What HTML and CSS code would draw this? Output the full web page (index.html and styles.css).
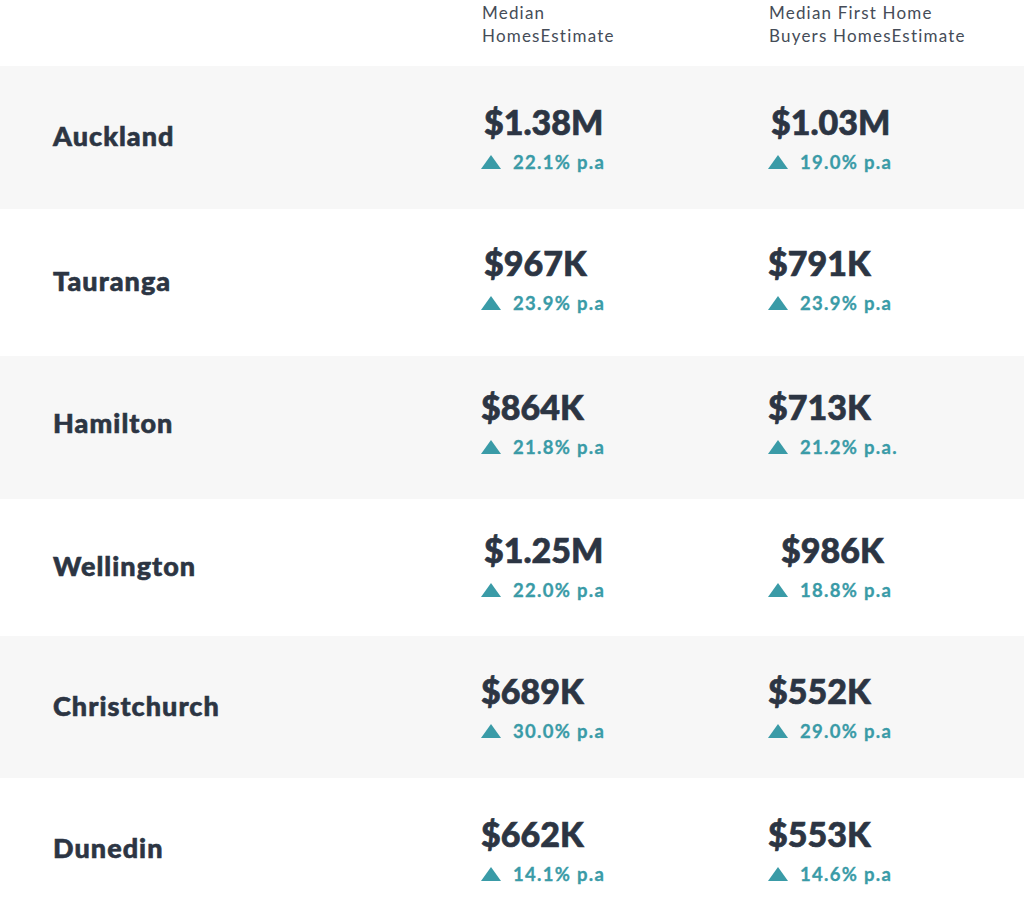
FILE: index.html
```html
<!DOCTYPE html>
<html lang="en">
<head>
<meta charset="utf-8">
<title>Median Home Estimates</title>
<link rel="stylesheet" href="styles.css">
</head>
<body>
<div class="table">
  <div class="head">
    <div class="head-cell"></div>
    <div class="head-cell">Median<br>HomesEstimate</div>
    <div class="head-cell">Median First Home<br>Buyers HomesEstimate</div>
  </div>

  <div class="row shade h143">
    <div class="city">Auckland</div>
    <div class="value"><div class="price shift-3">$1.38M</div><div class="growth"><span class="tri"></span>22.1% p.a</div></div>
    <div class="value"><div class="price shift-3">$1.03M</div><div class="growth"><span class="tri"></span>19.0% p.a</div></div>
  </div>

  <div class="row h147 lift-4">
    <div class="city">Tauranga</div>
    <div class="value"><div class="price shift-3">$967K</div><div class="growth"><span class="tri"></span>23.9% p.a</div></div>
    <div class="value"><div class="price">$791K</div><div class="growth"><span class="tri"></span>23.9% p.a</div></div>
  </div>

  <div class="row shade h143 lift-5">
    <div class="city">Hamilton</div>
    <div class="value"><div class="price">$864K</div><div class="growth"><span class="tri"></span>21.8% p.a</div></div>
    <div class="value"><div class="price">$713K</div><div class="growth"><span class="tri"></span>21.2% p.a.</div></div>
  </div>

  <div class="row h137 lift-2">
    <div class="city">Wellington</div>
    <div class="value"><div class="price shift-3">$1.25M</div><div class="growth"><span class="tri"></span>22.0% p.a</div></div>
    <div class="value"><div class="price shift-13">$986K</div><div class="growth"><span class="tri"></span>18.8% p.a</div></div>
  </div>

  <div class="row shade h142">
    <div class="city">Christchurch</div>
    <div class="value"><div class="price">$689K</div><div class="growth"><span class="tri"></span>30.0% p.a</div></div>
    <div class="value"><div class="price">$552K</div><div class="growth"><span class="tri"></span>29.0% p.a</div></div>
  </div>

  <div class="row h143">
    <div class="city">Dunedin</div>
    <div class="value"><div class="price">$662K</div><div class="growth"><span class="tri"></span>14.1% p.a</div></div>
    <div class="value"><div class="price">$553K</div><div class="growth"><span class="tri"></span>14.6% p.a</div></div>
  </div>
</div>
</body>
</html>
```

FILE: styles.css
```css
html, body {
  margin: 0;
  padding: 0;
  background: #ffffff;
}

body {
  font-family: "Lato", "Open Sans", sans-serif;
  color: #2c3543;
}

.table {
  width: 1024px;
}

.head,
.row {
  display: grid;
  grid-template-columns: 481px 287px 1fr;
}

.head {
  height: 66px;
  box-sizing: border-box;
  padding-top: 1px;
}

.head-cell {
  font-size: 17px;
  line-height: 23px;
  font-weight: 400;
  letter-spacing: 1.2px;
  color: #454c58;
  padding-left: 1px;
}

.row {
  align-items: center;
}

.shade {
  background: #f7f7f7;
}

.h137 { height: 137px; }
.h142 { height: 142px; }
.h143 { height: 143px; }
.h147 { height: 147px; }

.city {
  padding-left: 53px;
  padding-bottom: 3px;
  font-size: 27px;
  font-weight: 900;
  line-height: 32px;
  letter-spacing: 1.05px;
  color: #2c3543;
  -webkit-text-stroke: 0.6px #2c3543;
}

.value {
  display: flex;
  flex-direction: column;
  gap: 8px;
}

/* content in some rows sits slightly above the row's centre */
.lift-2 .value { padding-bottom: 4px; }
.lift-4 .value { padding-bottom: 8px; }
.lift-5 .value { padding-bottom: 10px; }
.lift-5 .city { padding-bottom: 9px; }

.price {
  font-size: 34px;
  line-height: 40px;
  font-weight: 900;
  color: #2c3543;
  -webkit-text-stroke: 0.7px #2c3543;
}

.shift-3 { padding-left: 3px; }
.shift-13 { padding-left: 13px; }

.growth {
  display: flex;
  align-items: center;
  font-size: 18.5px;
  line-height: 24px;
  font-weight: 700;
  letter-spacing: 1.3px;
  color: #3a9ba7;
  -webkit-text-stroke: 0.3px #3a9ba7;
}

.tri {
  width: 0;
  height: 0;
  border-left: 10px solid transparent;
  border-right: 10px solid transparent;
  border-bottom: 14px solid #3a9ba7;
  margin-right: 12px;
}
```
